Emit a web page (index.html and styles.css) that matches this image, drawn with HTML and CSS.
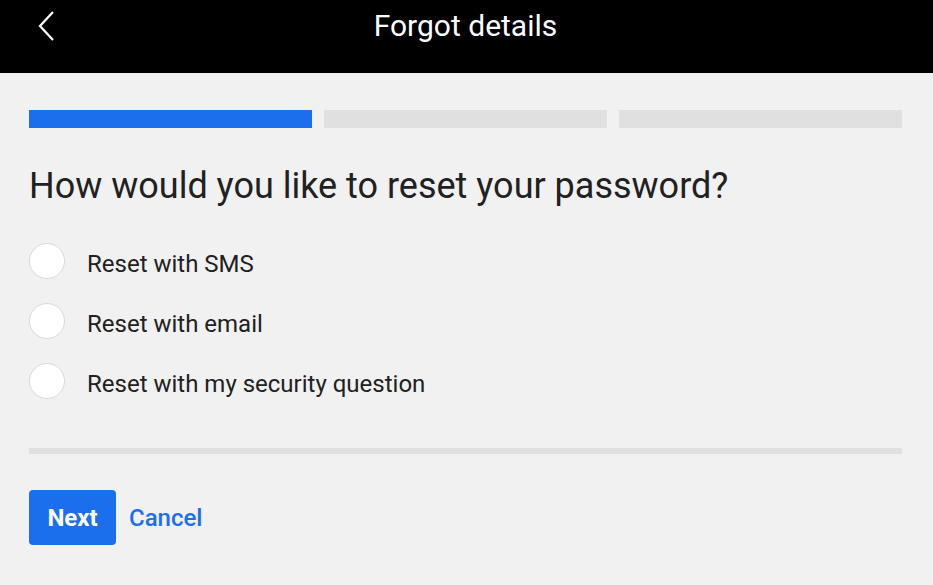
FILE: index.html
```html
<!DOCTYPE html>
<html>
<head>
<meta charset="utf-8">
<link rel="stylesheet" href="styles.css">
</head>
<body>
<header class="topbar">
  <button class="back" aria-label="Back">
    <svg width="18" height="30" viewBox="0 0 18 30"><path d="M15 1 L2 15 L15 29" fill="none" stroke="#fff" stroke-width="2.2"/></svg>
  </button>
  <h1 class="title">Forgot details</h1>
</header>
<main class="content">
  <div class="progress">
    <div class="step active"></div>
    <div class="step"></div>
    <div class="step"></div>
  </div>
  <h2 class="question">How would you like to reset your password?</h2>
  <ul class="options">
    <li class="option"><span class="radio"></span><span class="label">Reset with SMS</span></li>
    <li class="option"><span class="radio"></span><span class="label">Reset with email</span></li>
    <li class="option"><span class="radio"></span><span class="label">Reset with my security question</span></li>
  </ul>
  <hr class="divider">
  <div class="actions">
    <button class="next">Next</button>
    <a class="cancel" href="#">Cancel</a>
  </div>
</main>
</body>
</html>
```
FILE: styles.css
```css
* { box-sizing: border-box; }
html, body { margin: 0; padding: 0; }
body {
  background: #f1f1f1;
  font-family: Roboto, "Liberation Sans", sans-serif;
  color: #212121;
  width: 933px;
  height: 585px;
  overflow: hidden;
}
.topbar {
  position: relative;
  height: 73px;
  background: #000;
  display: flex;
  justify-content: center;
  padding-top: 8px;
}
.back {
  position: absolute;
  left: 38px;
  top: 11px;
  background: none;
  border: 0;
  padding: 0;
  display: flex;
}
.title {
  margin: 0 0 0 -2px;
  color: #fff;
  font-weight: 400;
  font-size: 30px;
  line-height: 36px;
}
.content {
  padding: 37px 31px 0 29px;
}
.progress {
  display: flex;
  gap: 12px;
}
.step {
  flex: 1;
  height: 18px;
  background: #e0e0e0;
}
.step.active { background: #1b6eec; }
.question {
  margin: 37px 0 0;
  font-size: 36px;
  font-weight: 400;
  line-height: 42px;
  color: #212121;
}
.options {
  list-style: none;
  margin: 36px 0 0;
  padding: 0;
  display: flex;
  flex-direction: column;
  gap: 24px;
}
.option {
  display: flex;
  align-items: center;
  height: 36px;
}
.radio {
  width: 36px;
  height: 36px;
  border-radius: 50%;
  background: #fff;
  border: 1px solid #d7d9dd;
  flex: none;
}
.label {
  margin-left: 22px;
  font-size: 24px;
  padding-top: 5px;
}
.divider {
  margin: 49px 0 0;
  border: 0;
  height: 6px;
  background: #e0e0e0;
}
.actions {
  margin-top: 36px;
  display: flex;
  align-items: center;
  gap: 13px;
}
.next {
  width: 87px;
  height: 55px;
  border: 0;
  border-radius: 4px;
  background: #1b6eec;
  color: #fff;
  font-family: Roboto, "Liberation Sans", sans-serif;
  font-weight: 700;
  font-size: 24px;
  padding: 0;
}
.cancel {
  color: #1b6eec;
  font-size: 24px;
  font-weight: 500;
  text-decoration: none;
}
```
